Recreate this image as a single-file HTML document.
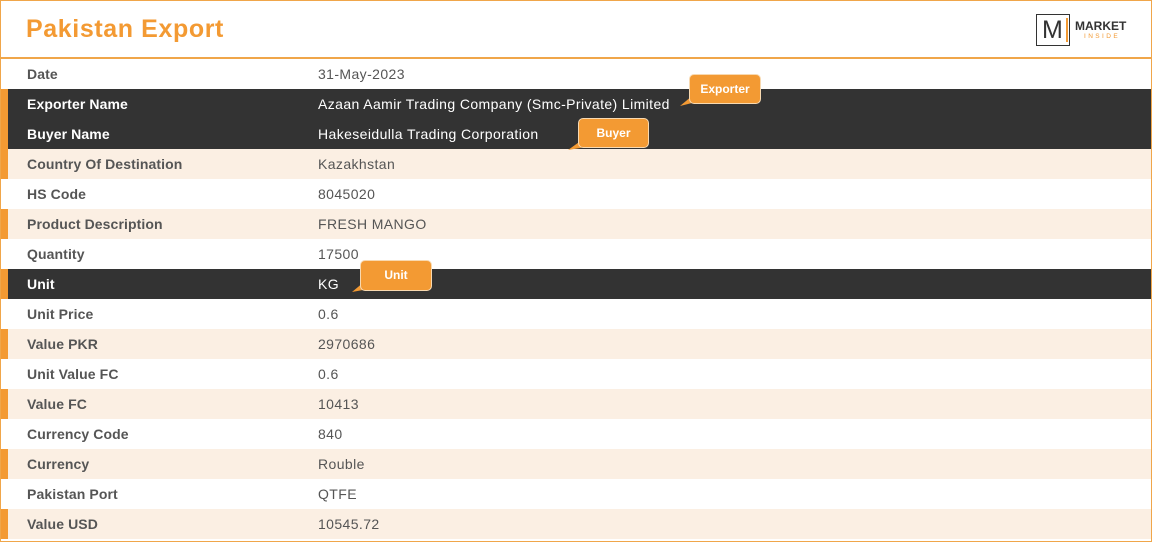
<!DOCTYPE html>
<html><head><meta charset="utf-8"><style>
*{margin:0;padding:0;box-sizing:border-box}
body{width:1152px;height:542px;background:#fff;font-family:"Liberation Sans",sans-serif;position:relative;overflow:hidden}
.frame{position:absolute;left:0;top:0;width:1152px;height:542px;border:1px solid #f0a64a}
.hdr{position:absolute;left:0;top:0;width:1152px;height:59px;border-bottom:2px solid #f0a64a}
.title{position:absolute;left:26px;top:15px;font-size:25px;font-weight:bold;color:#f39a33;letter-spacing:0.6px}
.row{position:absolute;left:1px;width:1150px;height:30px;font-size:14px;line-height:30px;color:#555}
.row .l{position:absolute;left:26px;font-weight:bold;letter-spacing:0.1px}
.row .v{position:absolute;left:317px;letter-spacing:0.4px}
.acc{border-left:7px solid #f39a33}
.acc .l{left:19px}.acc .v{left:310px}
.beige{background:#fbefe3}
.dark{background:#333;color:#fff}
.co{position:absolute;background:#f39a33;color:#fff;font-size:12px;font-weight:bold;text-align:center;border:1px solid #f8d9b0;border-radius:5px;line-height:28px}
</style></head><body>
<div class="hdr"><div class="title">Pakistan Export</div>
<div style="position:absolute;left:1036px;top:14px;width:34px;height:32px;border:1.5px solid #333;"></div>
<div style="position:absolute;left:1042px;top:14px;font-size:25px;color:#333;line-height:32px">M</div>
<div style="position:absolute;left:1066px;top:18px;width:2px;height:24px;background:#f39a33"></div>
<div style="position:absolute;left:1075px;top:19px;font-size:12px;font-weight:bold;color:#333">MARKET</div>
<div style="position:absolute;left:1084px;top:33px;font-size:6.5px;letter-spacing:2.4px;color:#f39a33">INSIDE</div>
</div>
<div class="row" style="top:59px"><span class="l">Date</span><span class="v">31-May-2023</span></div>
<div class="row dark acc" style="top:89px"><span class="l">Exporter Name</span><span class="v">Azaan Aamir Trading Company (Smc-Private) Limited</span></div>
<div class="row dark acc" style="top:119px"><span class="l">Buyer Name</span><span class="v">Hakeseidulla Trading Corporation</span></div>
<div class="row beige acc" style="top:149px"><span class="l">Country Of Destination</span><span class="v">Kazakhstan</span></div>
<div class="row" style="top:179px"><span class="l">HS Code</span><span class="v">8045020</span></div>
<div class="row beige acc" style="top:209px"><span class="l">Product Description</span><span class="v">FRESH MANGO</span></div>
<div class="row" style="top:239px"><span class="l">Quantity</span><span class="v">17500</span></div>
<div class="row dark acc" style="top:269px"><span class="l">Unit</span><span class="v">KG</span></div>
<div class="row" style="top:299px"><span class="l">Unit Price</span><span class="v">0.6</span></div>
<div class="row beige acc" style="top:329px"><span class="l">Value PKR</span><span class="v">2970686</span></div>
<div class="row" style="top:359px"><span class="l">Unit Value FC</span><span class="v">0.6</span></div>
<div class="row beige acc" style="top:389px"><span class="l">Value FC</span><span class="v">10413</span></div>
<div class="row" style="top:419px"><span class="l">Currency Code</span><span class="v">840</span></div>
<div class="row beige acc" style="top:449px"><span class="l">Currency</span><span class="v">Rouble</span></div>
<div class="row" style="top:479px"><span class="l">Pakistan Port</span><span class="v">QTFE</span></div>
<div class="row beige acc" style="top:509px"><span class="l">Value USD</span><span class="v">10545.72</span></div>
<div class="frame"></div>
<svg style="position:absolute;left:0;top:0" width="1152" height="542">
<polygon points="692,96 680,106 700,101" fill="#f39a33"/>
<polygon points="582,140 568,150 592,146" fill="#f39a33"/>
<polygon points="364,282 352,292 374,288" fill="#f39a33"/>
</svg>
<div class="co" style="left:689px;top:74px;width:72px;height:30px">Exporter</div>
<div class="co" style="left:578px;top:118px;width:71px;height:30px">Buyer</div>
<div class="co" style="left:360px;top:260px;width:72px;height:31px">Unit</div>
</body></html>
